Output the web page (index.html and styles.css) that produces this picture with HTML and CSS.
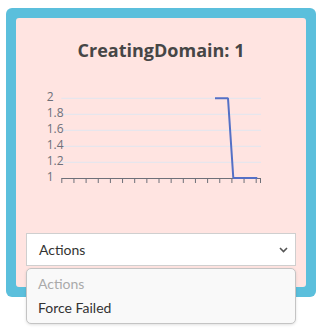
FILE: index.html
```html
<!DOCTYPE html>
<html>
<head>
<meta charset="utf-8">
<link rel="stylesheet" href="styles.css">
</head>
<body>
<div class="frame">
  <div class="card">
    <h1 class="title">CreatingDomain: 1</h1>
    <svg class="chart" width="270" height="171" viewBox="0 0 270 171">
      <g class="grid">
        <line x1="35.3" y1="36.3" x2="235" y2="36.3"/>
        <line x1="35.3" y1="52.3" x2="235" y2="52.3"/>
        <line x1="35.3" y1="68.3" x2="235" y2="68.3"/>
        <line x1="35.3" y1="84.3" x2="235" y2="84.3"/>
        <line x1="35.3" y1="100.3" x2="235" y2="100.3"/>
      </g>
      <g class="labels">
        <text x="20.7" y="34.7">2</text>
        <text x="20.7" y="50.7">1.8</text>
        <text x="20.7" y="66.7">1.6</text>
        <text x="20.7" y="82.7">1.4</text>
        <text x="20.7" y="98.7">1.2</text>
        <text x="20.7" y="114.5">1</text>
      </g>
      <g class="axis">
        <line x1="35.3" y1="116.5" x2="235" y2="116.5"/>
        <path d="M35.8 116.5v4.5M47.95 116.5v4.5M60.1 116.5v4.5M72.25 116.5v4.5M84.4 116.5v4.5M96.55 116.5v4.5M108.7 116.5v4.5M120.85 116.5v4.5M133 116.5v4.5M145.15 116.5v4.5M157.3 116.5v4.5M169.45 116.5v4.5M181.6 116.5v4.5M193.75 116.5v4.5M205.9 116.5v4.5M218.05 116.5v4.5M230.2 116.5v4.5M234.5 116.5v4.5"/>
      </g>
      <polyline class="series" points="189,36.3 202,36.3 207.3,116 231.3,116"/>
    </svg>
    <div class="select-wrap">
      <div class="select">
        <span class="select-text">Actions</span>
        <svg class="chev" width="9" height="6" viewBox="0 0 9 6"><path d="M1 1l3.5 3.5L8 1" fill="none" stroke="#555" stroke-width="1.6"/></svg>
      </div>
      <div class="menu">
        <div class="opt opt-disabled">Actions</div>
        <div class="opt">Force Failed</div>
      </div>
    </div>
  </div>
</div>
</body>
</html>
```
FILE: styles.css
```css
html, body {
  margin: 0;
  padding: 0;
  background: #ffffff;
}
body {
  padding: 8px 5px 0 6px;
  width: 321px;
  height: 336px;
  box-sizing: border-box;
  overflow: hidden;
}
.frame {
  width: 310px;
  box-sizing: border-box;
  background: #5bbfdc;
  border-radius: 6px;
  padding: 10px;
}
.card {
  background: #ffe4e1;
  border-radius: 3px;
  padding: 10px 10px 21px;
  display: flex;
  flex-direction: column;
}
.title {
  margin: 10px 0 0;
  height: 24px;
  line-height: 24px;
  font-family: "Open Sans", sans-serif;
  font-weight: 700;
  font-size: 18px;
  color: #464646;
  text-align: center;
}
.chart {
  display: block;
}
.grid line {
  stroke: #e0e6f1;
  stroke-width: 1;
}
.labels text {
  font-family: "Open Sans", sans-serif;
  font-size: 12px;
  fill: #6e7079;
  dominant-baseline: central;
}
.axis line, .axis path {
  stroke: #6e7079;
  stroke-width: 1;
  fill: none;
}
.series {
  fill: none;
  stroke: #5470c6;
  stroke-width: 2;
  stroke-linejoin: bevel;
}
.select-wrap {
  position: relative;
}
.select {
  height: 33px;
  box-sizing: border-box;
  background: #ffffff;
  border: 1px solid #cfcfcf;
  display: flex;
  align-items: center;
  justify-content: space-between;
  padding: 0 7px 0 12px;
  font-family: Lato, sans-serif;
  font-size: 14px;
  color: #333333;
}
.chev {
  display: block;
}
.menu {
  position: absolute;
  left: 0;
  right: 0;
  top: 35px;
  background: #f9f9f9;
  border: 1px solid #c4c4c4;
  border-radius: 5px;
  padding: 3px 0;
  box-shadow: 0 1px 3px rgba(0, 0, 0, 0.12);
  font-family: Lato, sans-serif;
  font-size: 14px;
}
.opt {
  height: 24px;
  line-height: 24px;
  padding: 0 11px;
  color: #333333;
}
.opt-disabled {
  color: #aaaaaa;
}
```
